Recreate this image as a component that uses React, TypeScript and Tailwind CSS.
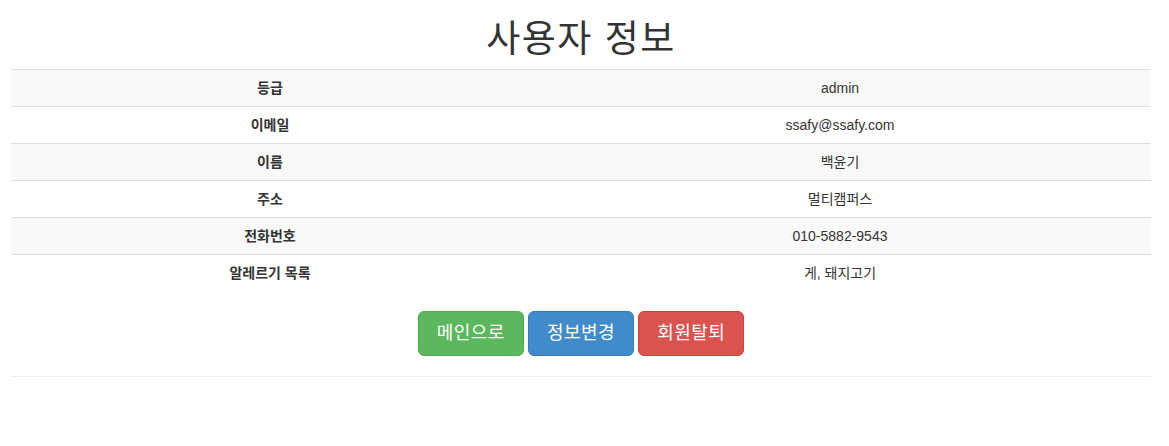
const rows = [
  { label: "등급", value: "admin" },
  { label: "이메일", value: "ssafy@ssafy.com" },
  { label: "이름", value: "백윤기" },
  { label: "주소", value: "멀티캠퍼스" },
  { label: "전화번호", value: "010-5882-9543" },
  { label: "알레르기 목록", value: "게, 돼지고기" },
];

export default function App() {
  return (
    <div
      className="bg-white text-[#333] text-[14px] leading-[20px]"
      style={{ fontFamily: '"Liberation Sans", "Noto Sans CJK KR", sans-serif' }}
    >
      <div className="ml-[11px] w-[1140px]">
        <h1 className="mt-[20px] mb-[10px] pt-[1px] text-center text-[37px] leading-[38px] tracking-[1.5px] font-normal">사용자 정보</h1>

        <table className="w-full border-collapse">
          <tbody>
            {rows.map((row, i) => (
              <tr key={row.label} className={i % 2 === 0 ? "bg-[#f9f9f9]" : "bg-white"}>
                <th className="border-t border-[#ddd] p-[8px] text-center font-bold w-[518px]">{row.label}</th>
                <td className="border-t border-[#ddd] p-[8px] text-center">{row.value}</td>
              </tr>
            ))}
          </tbody>
        </table>

        <div className="mt-[20px] flex justify-center gap-[4px]">
          <button className="rounded-[6px] border border-[#4cae4c] bg-[#5cb85c] px-[18px] py-[10px] text-[18px] leading-[23px] tracking-[0.5px] text-white">
            메인으로
          </button>
          <button className="rounded-[6px] border border-[#357ebd] bg-[#428bca] px-[18px] py-[10px] text-[18px] leading-[23px] tracking-[0.5px] text-white">
            정보변경
          </button>
          <button className="rounded-[6px] border border-[#d43f3a] bg-[#d9534f] px-[18px] py-[10px] text-[18px] leading-[23px] tracking-[0.5px] text-white">
            회원탈퇴
          </button>
        </div>

        <hr className="mt-[20px] mb-[20px] border-0 border-t border-[#eee]" />
      </div>
    </div>
  );
}
